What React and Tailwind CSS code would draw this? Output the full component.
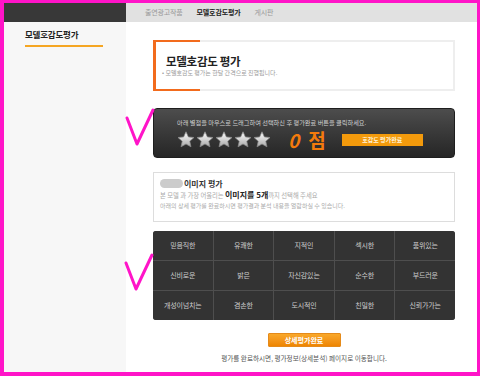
const KR = { fontFamily: '"Noto Sans CJK KR", "Noto Sans", sans-serif' };

const words = [
  '믿음직한', '유쾌한', '지적인', '섹시한', '품위있는',
  '신비로운', '밝은', '자신감있는', '순수한', '부드러운',
  '개성이넘치는', '겸손한', '도시적인', '친밀한', '신뢰가가는',
];

function Star() {
  return (
    <svg width="18" height="17" viewBox="0 0 24 23">
      <defs>
        <linearGradient id="sg" x1="0" y1="0" x2="0" y2="1">
          <stop offset="0" stopColor="#ffffff" />
          <stop offset="1" stopColor="#a9a9a9" />
        </linearGradient>
      </defs>
      <path
        d="M12 1l3.2 7 7.6.8-5.7 5.1 1.6 7.5L12 17.6l-6.7 3.8 1.6-7.5L1.2 8.8 8.8 8z"
        fill="url(#sg)"
        stroke="#8a8a8a"
        strokeWidth="1"
        strokeLinejoin="round"
      />
    </svg>
  );
}

function Check({ className }) {
  return (
    <svg className={className} width="30" height="40" viewBox="0 0 30 40">
      <path d="M2 10 L12 36 L28 2" fill="none" stroke="#ff14c8" strokeWidth="3" strokeLinecap="round" strokeLinejoin="round" />
    </svg>
  );
}

export default function App() {
  return (
    <div className="relative w-[480px] h-[376px] overflow-hidden bg-[#ff14c8] pt-[3px] pl-[4px] pr-[3px] pb-[4px]" style={KR}>
      <div className="flex h-full bg-white">
        {/* sidebar */}
        <div className="w-[122px] shrink-0 flex flex-col bg-[#f7f7f7]">
          <div className="h-[19px] bg-[#383838]" />
          <div className="pl-[21px] pt-[5px]">
            <div className="text-[8.5px] font-bold text-[#222] leading-[14px] tracking-tight">모델호감도평가</div>
            <div className="mt-[4px] w-[78px] h-[2px] bg-[#f5a623]" />
          </div>
        </div>

        {/* main */}
        <div className="flex-1 flex flex-col">
          <div className="h-[19px] bg-[#e1e1e1] flex items-center pl-[19px] gap-[14px] text-[7px] tracking-tight">
            <span className="text-[#999]">출연광고작품</span>
            <span className="font-bold text-[#222]">모델호감도평가</span>
            <span className="text-[#999]">게시판</span>
          </div>

          <div className="pl-[27px] w-[329px] flex flex-col">
            {/* title box */}
            <div className="relative mt-[18px] h-[51px] border-2 border-[#eeeeee] border-l-[3px] border-l-[#f26b1d] pl-[10px] flex flex-col justify-center">
              <div className="absolute -top-[2px] -left-[3px] w-[47px] h-[2px] bg-[#f26b1d]" />
              <div className="absolute -bottom-[2px] -left-[3px] w-[47px] h-[2px] bg-[#f26b1d]" />
              <div className="text-[11.5px] font-bold text-[#222] leading-[14px] tracking-tight">모델호감도 평가</div>
              <div className="text-[6px] text-[#999] leading-[10px] -ml-[4px]">• 모델호감도 평가는 한달 간격으로 진행됩니다.</div>
            </div>

            {/* star box */}
            <div className="mt-[17px] h-[50px] rounded-[4px] border border-[#1e1e1e] bg-gradient-to-b from-[#4d4d4d] to-[#262626] pl-[23px] pt-[9px]">
              <div className="text-[6.2px] text-[#cfcfcf] leading-[9px]">아래 별점을 마우스로 드래그하여 선택하신 후 평가완료 버튼을 클릭하세요.</div>
              <div className="flex items-center mt-[3px]">
                <div className="flex gap-[1px]">
                  <Star /><Star /><Star /><Star /><Star />
                </div>
                <div className="ml-[17px] text-[19px] font-bold italic text-[#f47b0c] leading-none flex gap-[9px]">
                  <span>0</span>
                  <span className="not-italic">점</span>
                </div>
                <div className="ml-[16px] w-[81px] h-[12px] bg-[#f39a0c] flex items-center justify-center text-[6px] font-bold text-[#fff4dc]">호감도 평가완료</div>
              </div>
            </div>

            {/* image box */}
            <div className="mt-[14px] h-[50px] border border-[#dddddd] pl-[6px] pt-[5px]">
              <div className="flex items-center gap-[1px]">
                <div className="w-[23px] h-[9px] rounded-full bg-[#cccccc]" />
                <span className="text-[8px] font-bold text-[#333] leading-[11px]">이미지 평가</span>
              </div>
              <div className="text-[6.3px] text-[#aaa] leading-[10px] mt-[1px]">
                본 모델 과 가장 어울리는 <b className="text-[8px] text-[#222]">이미지를 5개</b>까지 선택해 주세요
              </div>
              <div className="text-[6px] text-[#aaa] leading-[10px]">아래의 상세 평가를 완료하시면 평가결과 분석 내용을 열람하실 수 있습니다.</div>
            </div>

            {/* grid */}
            <div className="mt-[9px] rounded-[3px] overflow-hidden bg-[#4e4e4e] grid grid-cols-5 gap-px">
              {words.map((w) => (
                <div key={w} className="h-[29px] bg-[#333333] flex items-center justify-center text-[7px] text-[#cccccc] tracking-tight">
                  {w}
                </div>
              ))}
            </div>

            <div className="mt-[13px] flex justify-center">
              <div className="w-[73px] h-[14px] rounded-[1px] border border-[#e58a1a] bg-gradient-to-b from-[#f9a82a] to-[#ee8500] flex items-center justify-center text-[7px] font-bold text-white">상세평가완료</div>
            </div>
            <div className="mt-[6px] text-center text-[6.6px] text-[#555] leading-[10px]">평가를 완료하시면, 평가정보(상세분석) 페이지로 이동합니다.</div>
          </div>
        </div>
      </div>

      <Check className="absolute left-[125px] top-[108px]" />
      <Check className="absolute left-[124px] top-[253px]" />
    </div>
  );
}
